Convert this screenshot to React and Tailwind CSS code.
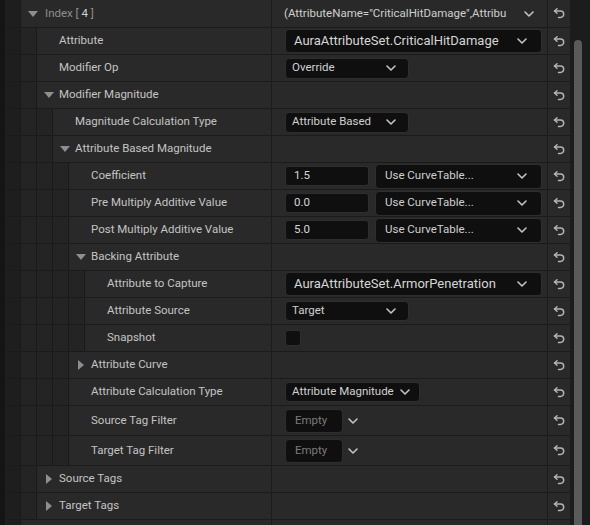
import React from "react";

/* ================= ICONS ================= */
const Chevron = ({ className = "" }) => (
  <svg width="10" height="6" viewBox="0 0 10 6" className={className}>
    <path d="M1 1 L5 5 L9 1" fill="none" stroke="#c4c4c4" strokeWidth="1.6" strokeLinecap="round" strokeLinejoin="round" />
  </svg>
);

const ResetIcon = () => (
  <svg width="12" height="11" viewBox="0 0 12 11">
    <path d="M1.5 3 H7.5 A3.2 3.2 0 0 1 7.5 9.4 H5.5" fill="none" stroke="#b5b5b5" strokeWidth="1.5" strokeLinecap="round" />
    <path d="M4 0.8 L1.5 3 L4 5.2" fill="none" stroke="#b5b5b5" strokeWidth="1.5" strokeLinecap="round" strokeLinejoin="round" />
  </svg>
);

const ArrowDown = () => (
  <svg width="10" height="6" viewBox="0 0 10 6">
    <path d="M0 0 H10 L5 6 Z" fill="#8e8e8e" />
  </svg>
);

const ArrowRight = () => (
  <svg width="6" height="10" viewBox="0 0 6 10">
    <path d="M0 0 V10 L6 5 Z" fill="#8e8e8e" />
  </svg>
);

/* ================= VALUE WIDGETS ================= */
const BigCombo = ({ text }) => (
  <div className="flex items-center justify-between w-[257px] h-[24px] rounded-[4px] bg-[#0f0f0f] border border-[#2e2e2e] pl-[8px] pr-[14px]">
    <span className="text-[13px] text-[#d6d6d6]">{text}</span>
    <Chevron />
  </div>
);

const SmallCombo = ({ text, width = "w-[124px]", h = "h-[21px]" }) => (
  <div className={`flex items-center justify-between ${width} ${h} rounded-[4px] bg-[#0f0f0f] border border-[#2e2e2e] pl-[6px] pr-[12px]`}>
    <span className="text-[11.5px] text-[#d0d0d0]">{text}</span>
    <Chevron />
  </div>
);

const NumberWithCurve = ({ value }) => (
  <div className="flex items-center gap-[6px]">
    <div className="flex items-center w-[84px] h-[20px] rounded-[3px] bg-[#0f0f0f] border border-[#2e2e2e] pl-[8px] text-[11.5px] text-[#d6d6d6]">
      {value}
    </div>
    <div className="flex items-center justify-between w-[167px] h-[25px] rounded-[4px] bg-[#0f0f0f] border border-[#2e2e2e] pl-[9px] pr-[14px]">
      <span className="text-[11.5px] text-[#cfcfcf]">Use CurveTable...</span>
      <Chevron />
    </div>
  </div>
);

const TagFilter = () => (
  <div className="flex items-center gap-[5px]">
    <div className="flex items-center w-[58px] h-[24px] rounded-[4px] bg-[#0f0f0f] border border-[#2e2e2e] pl-[9px] text-[11.5px] text-[#7c7c7c]">
      Empty
    </div>
    <Chevron />
  </div>
);

const Checkbox = () => (
  <div className="w-[16px] h-[16px] rounded-[3px] bg-[#0f0f0f] border border-[#2e2e2e]" />
);

/* ================= ROWS ================= */
const ROWS = [
  {
    depth: 0,
    arrow: "down",
    h: "h-[28px]",
    label: (
      <span className="ml-[2px] text-[#8f8f8f]">
        Index [ <span className="text-[#cfcfcf]">4</span> ]
      </span>
    ),
    value: (
      <div className="flex items-center justify-between w-full pr-[12px] -ml-[1px]">
        <span className="text-[11.5px] text-[#cfcfcf]">(AttributeName="CriticalHitDamage",Attribu</span>
        <Chevron />
      </div>
    ),
  },
  { depth: 1, label: "Attribute", value: <BigCombo text="AuraAttributeSet.CriticalHitDamage" /> },
  { depth: 1, label: "Modifier Op", value: <SmallCombo text="Override" /> },
  { depth: 1, arrow: "down", label: "Modifier Magnitude" },
  { depth: 2, label: "Magnitude Calculation Type", value: <SmallCombo text="Attribute Based" /> },
  { depth: 2, arrow: "down", label: "Attribute Based Magnitude" },
  { depth: 3, label: "Coefficient", value: <NumberWithCurve value="1.5" /> },
  { depth: 3, label: "Pre Multiply Additive Value", value: <NumberWithCurve value="0.0" /> },
  { depth: 3, label: "Post Multiply Additive Value", value: <NumberWithCurve value="5.0" /> },
  { depth: 3, arrow: "down", label: "Backing Attribute" },
  { depth: 4, label: "Attribute to Capture", value: <BigCombo text="AuraAttributeSet.ArmorPenetration" /> },
  { depth: 4, label: "Attribute Source", value: <SmallCombo text="Target" h="h-[20px]" /> },
  { depth: 4, label: "Snapshot", value: <Checkbox /> },
  { depth: 3, arrow: "right", label: "Attribute Curve" },
  {
    depth: 3,
    label: "Attribute Calculation Type",
    value: (
      <div className="flex items-center w-[135px] h-[20px] rounded-[4px] bg-[#0f0f0f] border border-[#2e2e2e] pl-[6px] gap-[6px]">
        <span className="text-[11.5px] text-[#d0d0d0]">Attribute Magnitude</span>
        <Chevron />
      </div>
    ),
  },
  { depth: 3, h: "h-[30px]", label: "Source Tag Filter", value: <TagFilter /> },
  { depth: 3, h: "h-[30px]", label: "Target Tag Filter", value: <TagFilter /> },
  { depth: 1, arrow: "right", label: "Source Tags" },
  { depth: 1, arrow: "right", label: "Target Tags" },
  { depth: 0, label: "", noReset: true },
];

const Gutter = ({ depth }) => (
  <>
    <div className="w-[16px] shrink-0 bg-[#1e1e1e] border-r border-[#191919]" />
    {Array.from({ length: depth }).map((_, i) => (
      <div key={i} className="w-[16px] shrink-0 bg-[#242424] border-r border-[#1a1a1a]" />
    ))}
  </>
);

const Row = ({ row }) => {
  const h = row.h || "h-[27px]";
  return (
    <div className={`flex ${h} shrink-0 border-b border-[#1b1b1b]`}>
      <div className="flex w-[267px] shrink-0 border-r border-[#1b1b1b]">
        <Gutter depth={row.depth} />
        <div className="flex-1 flex items-center bg-[#292929] text-[11.5px] text-[#c4c4c4]">
          <div className="w-[22px] shrink-0 flex items-center justify-center pl-[1px]">
            {row.arrow === "down" && <ArrowDown />}
            {row.arrow === "right" && <ArrowRight />}
          </div>
          {row.label}
        </div>
      </div>
      <div className="flex-1 flex items-center pl-[13px] bg-[#292929] border-r border-[#1b1b1b]">
        {row.value}
      </div>
      <div className="w-[22px] shrink-0 flex items-center justify-center bg-[#292929]">
        {!row.noReset && <ResetIcon />}
      </div>
    </div>
  );
};

/* ================= MAIN ================= */
export default function App() {
  return (
    <div
      className="flex w-[590px] h-[525px] overflow-hidden bg-[#1b1b1b]"
      style={{ fontFamily: "Roboto, 'Liberation Sans', sans-serif" }}
    >
      <div className="w-[5px] shrink-0 bg-[#151515]" />

      <div className="flex flex-col w-[565px] shrink-0">
        {ROWS.map((row, i) => (
          <Row key={i} row={row} />
        ))}
      </div>

      {/* SCROLLBAR */}
      <div className="flex w-[20px] shrink-0 bg-[#1c1c1c] pl-[4px] pt-[40px]">
        <div className="w-[8px] rounded-t-full bg-[#5a5a5a]" />
      </div>
    </div>
  );
}
